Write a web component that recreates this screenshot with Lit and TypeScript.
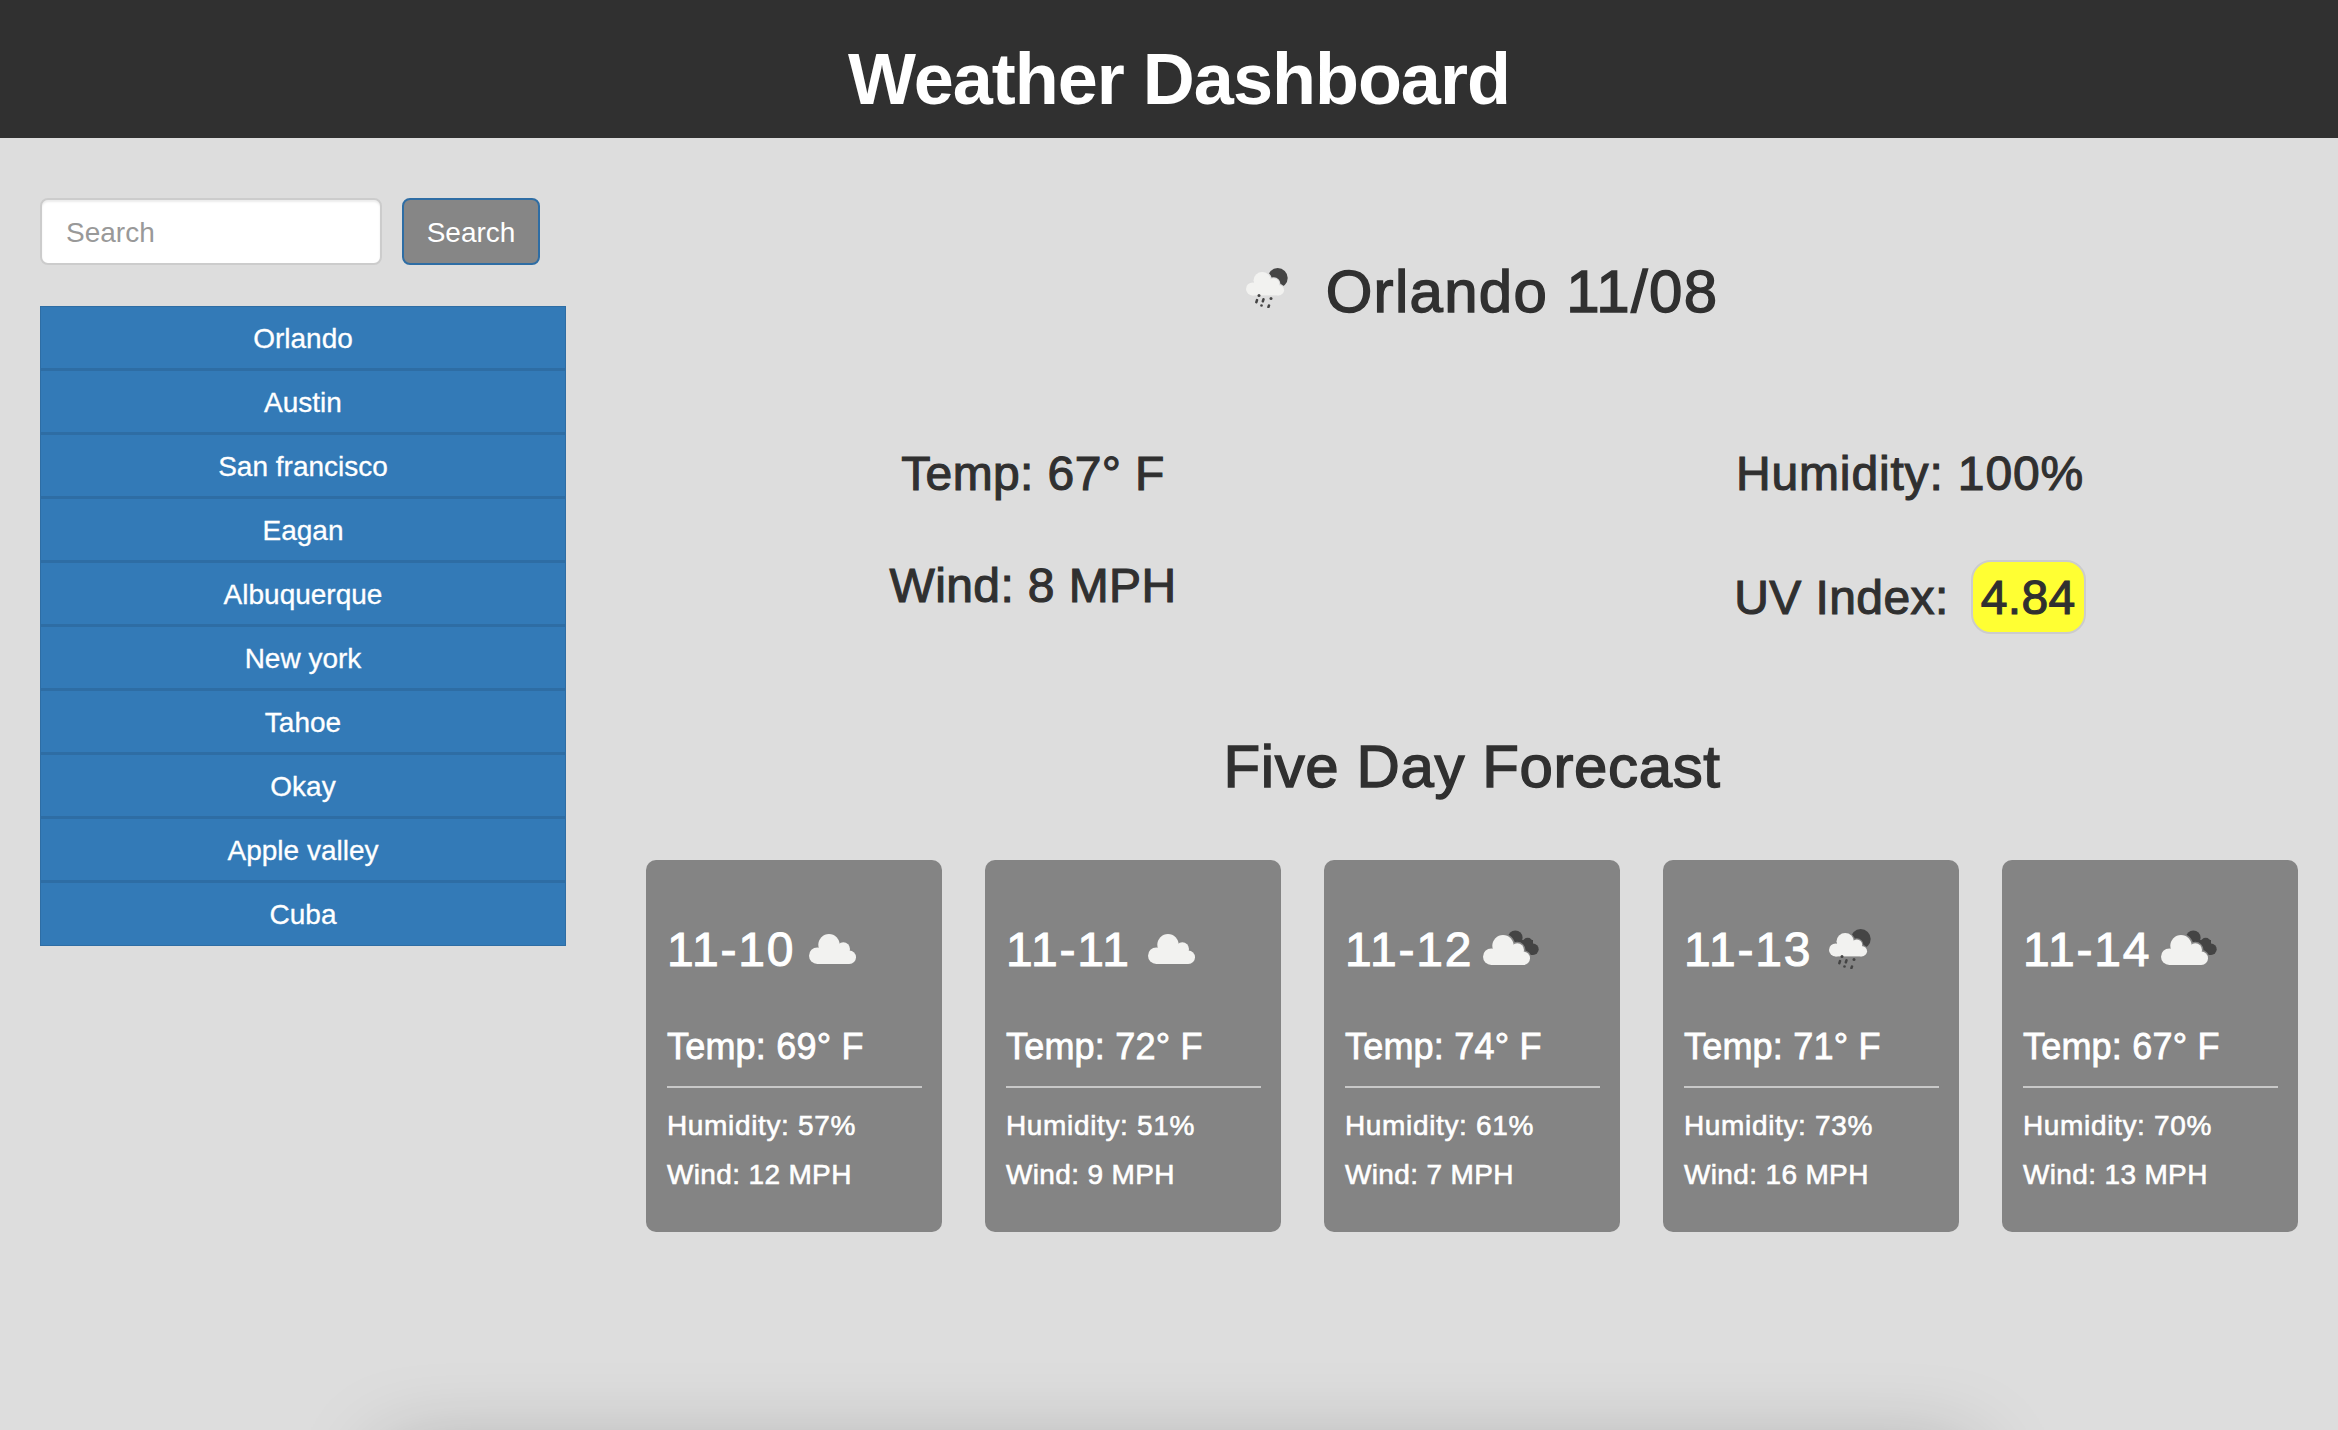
import { LitElement, html, css, svg } from "lit";
import { customElement } from "lit/decorators.js";

const cities = ["Orlando", "Austin", "San francisco", "Eagan", "Albuquerque", "New york", "Tahoe", "Okay", "Apple valley", "Cuba"];

type IconKind = "cloud" | "broken" | "rain";

const forecast: { date: string; icon: IconKind; temp: number; humidity: number; wind: number }[] = [
	{ date: "11-10", icon: "cloud", temp: 69, humidity: 57, wind: 12 },
	{ date: "11-11", icon: "cloud", temp: 72, humidity: 51, wind: 9 },
	{ date: "11-12", icon: "broken", temp: 74, humidity: 61, wind: 7 },
	{ date: "11-13", icon: "rain", temp: 71, humidity: 73, wind: 16 },
	{ date: "11-14", icon: "broken", temp: 67, humidity: 70, wind: 13 },
];

// cloud shape is a few circles on a flat bottom, 47 x 30 units
const lobes = svg`
	<circle cx="8.3" cy="21.7" r="8.3" />
	<circle cx="20" cy="10.7" r="10.7" />
	<circle cx="34.300" cy="15" r="6.700" />
	<circle cx="40.300" cy="23.300" r="6.700" />
	<rect x="8" y="16" width="32" height="14" />
`;
const cloud = svg`
	<g class="halo">${lobes}</g>
	<g class="puff">${lobes}</g>
`;

function icon(kind: IconKind) {
	if (kind === "cloud") {
		return html`<svg class="icon cloud" width="47" height="30" viewBox="0 0 47 30">${cloud}</svg>`;
	}
	if (kind === "broken") {
		return html`<svg class="icon broken" width="56" height="35" viewBox="0 -5 56 35">
			<g fill="#444">
				<circle cx="32.300" cy="2.700" r="7.300" />
				<circle cx="44.700" cy="7.700" r="5" />
				<circle cx="50" cy="14.300" r="5.700" />
				<rect x="28" y="5" width="22" height="15" />
			</g>
			${cloud}
		</svg>`;
	}
	return html`<svg class="icon rain" width="42" height="40" viewBox="0 0 42 40">
		<circle cx="31.700" cy="10" r="10" fill="#454545" />
		<g transform="translate(0 4) scale(0.81 0.78)">${cloud}</g>
		<g fill="#444">
			<circle cx="13" cy="27.500" r="1.500" />
			<rect x="9.500" y="31" width="2.500" height="4.500" rx="1" transform="rotate(18 11 33)" />
			<rect x="16" y="30" width="2.500" height="4.500" rx="1" transform="rotate(18 17 32)" />
			<circle cx="25" cy="30.500" r="1.500" />
			<circle cx="15.500" cy="37.500" r="1.300" />
			<rect x="21.500" y="36" width="2.500" height="4" rx="1" transform="rotate(18 22 38)" />
		</g>
	</svg>`;
}

@customElement("app-root")
export class AppRoot extends LitElement {
	static styles = css`
		:host {
			display: block;
			position: relative;
			height: 1430px;
			overflow: hidden;
			background: #dddddd;
			color: #303030;
			font-family: "Liberation Sans", Arial, sans-serif;
			--icon-bg: #dddddd;
		}
		header {
			box-sizing: border-box;
			height: 138px;
			padding: 20px 0 0 20px;
			background: #303030;
			color: #fff;
			display: flex;
			justify-content: center;
			align-items: center;
		}
		h1 {
			margin: 0;
			font-size: 72px;
			font-weight: 700;
			letter-spacing: -1px;
		}
		.layout {
			display: flex;
			padding: 60px 40px 0;
		}
		aside {
			width: 526px;
			flex: none;
			font-size: 28px;
		}
		form {
			display: flex;
			gap: 20px;
			margin-bottom: 41px;
		}
		input {
			box-sizing: border-box;
			width: 342px;
			height: 67px;
			padding: 2px 24px 0;
			border: 2px solid #ccc;
			border-radius: 8px;
			background: #fff;
			font: 28px "Liberation Sans", Arial, sans-serif;
			box-shadow: inset 0 2px 2px rgba(0, 0, 0, 0.075);
		}
		input::placeholder {
			color: #999;
			opacity: 1;
		}
		button {
			box-sizing: border-box;
			width: 138px;
			height: 67px;
			padding: 2px 0 0;
			border: 2px solid #2e6da4;
			border-radius: 8px;
			background: #868686;
			color: #fff;
			font: 28px "Liberation Sans", Arial, sans-serif;
		}
		ul {
			list-style: none;
			margin: 0;
			padding: 0;
			background: #337ab7;
			border: 1px solid #2e6da4;
			border-bottom: 0;
		}
		li {
			box-sizing: border-box;
			height: 64px;
			line-height: 64px;
			text-align: center;
			color: #fff;
			border-bottom: 3px solid #2e6da4;
			-webkit-text-stroke: 0.3px #fff;
		}
		li:last-child {
			height: 63px;
			border-bottom-width: 1px;
		}
		main {
			flex: 1;
			margin-left: 80px;
			min-width: 0;
		}
		.city {
			display: flex;
			align-items: center;
			justify-content: center;
			height: 70px;
			margin-top: 58px;
			padding-left: 20px;
		}
		h2 {
			margin: 0;
			font-size: 60px;
			font-weight: 400;
			letter-spacing: 1.3px;
			-webkit-text-stroke: 1.4px #303030;
		}
		.stats {
			display: grid;
			grid-template-columns: 774px 1fr;
			margin-top: 120px;
			font-size: 48px;
			letter-spacing: 0.4px;
			-webkit-text-stroke: 1.1px #303030;
		}
		.stat {
			text-align: center;
		}
		.left {
			display: flex;
			flex-direction: column;
			gap: 57px;
		}
		.right {
			display: flex;
			flex-direction: column;
			gap: 59px;
			align-items: center;
			padding-left: 102px;
		}
		.wide {
			letter-spacing: 0.85px;
		}
		.uv {
			display: flex;
			align-items: center;
			gap: 22px;
		}
		.badge {
			box-sizing: border-box;
			height: 74px;
			padding: 0 8px;
			line-height: 72px;
			background: #ffff33;
			border: 2px solid #ccc;
			border-radius: 20px;
		}
		h2.five {
			margin-top: 98px;
			text-align: center;
			letter-spacing: 0.6px;
		}
		.cards {
			display: flex;
			justify-content: space-between;
			margin-top: 59px;
		}
		.card {
			box-sizing: border-box;
			width: 296px;
			height: 372px;
			padding: 61px 20px 0 21px;
			background: #848484;
			border-radius: 10px;
			color: #fff;
			--icon-bg: #848484;
		}
		.date {
			display: flex;
			align-items: center;
			height: 56px;
			font-size: 48px;
			letter-spacing: 1.8px;
			-webkit-text-stroke: 1px #fff;
		}
		.date span {
			flex: none;
			width: 127px;
			white-space: nowrap;
		}
		.icon.cloud {
			margin: 0 0 0 15px;
		}
		.icon.broken {
			margin: -4px 0 0 11px;
		}
		.icon.rain {
			margin: 0 0 0 18px;
		}
		.city .icon.rain {
			margin: -6px 38px 0 0;
		}
		.puff {
			fill: #f2f2f0;
		}
		.halo {
			fill: var(--icon-bg);
			stroke: var(--icon-bg);
			stroke-width: 3;
		}
		.temp {
			margin-top: 49px;
			font-size: 36px;
			line-height: 42px;
			letter-spacing: 0.2px;
			-webkit-text-stroke: 0.8px #fff;
		}
		hr {
			margin: 18px 0 13px;
			border: 0;
			border-top: 2px solid #c8c8c8;
		}
		.small {
			font-size: 28px;
			line-height: 49px;
			letter-spacing: 0.35px;
			-webkit-text-stroke: 0.6px #fff;
		}
		.small.hum {
			letter-spacing: 0.65px;
		}
		.edge {
			position: absolute;
			left: 385px;
			width: 1585px;
			top: 1452px;
			height: 100px;
			box-shadow: 0 0 85px rgba(0, 0, 0, 0.25);
		}
	`;

	render() {
		return html`
			<header><h1>Weather Dashboard</h1></header>
			<div class="layout">
				<aside>
					<form>
						<input placeholder="Search" />
						<button type="button">Search</button>
					</form>
					<ul>
						${cities.map((c) => html`<li>${c}</li>`)}
					</ul>
				</aside>
				<main>
					<div class="city">${icon("rain")}<h2>Orlando 11/08</h2></div>
					<div class="stats">
						<div class="left">
							<div class="stat">Temp: 67° F</div>
							<div class="stat">Wind: 8 MPH</div>
						</div>
						<div class="right">
							<div class="stat wide">Humidity: 100%</div>
							<div class="uv"><span>UV Index:</span><span class="badge">4.84</span></div>
						</div>
					</div>
					<h2 class="five">Five Day Forecast</h2>
					<div class="cards">
						${forecast.map(
							(d) => html`
								<div class="card">
									<div class="date"><span>${d.date}</span>${icon(d.icon)}</div>
									<div class="temp">Temp: ${d.temp}° F</div>
									<hr />
									<div class="small hum">Humidity: ${d.humidity}%</div>
									<div class="small">Wind: ${d.wind} MPH</div>
								</div>
							`
						)}
					</div>
				</main>
			</div>
			<div class="edge"></div>
		`;
	}
}
